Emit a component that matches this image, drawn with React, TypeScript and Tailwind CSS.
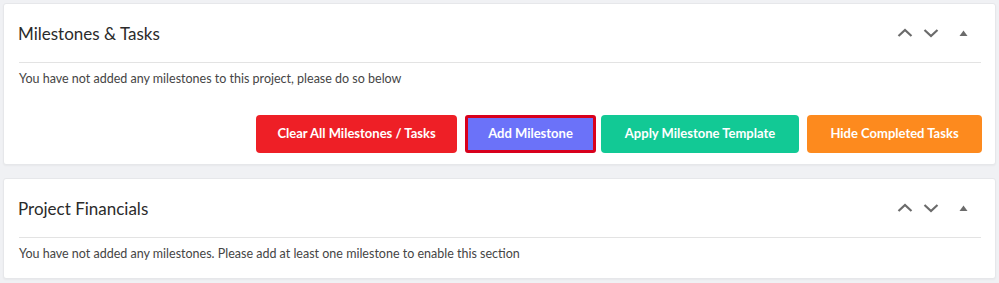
import React from "react";

const ChevUp = () => (
  <svg width="16" height="10" viewBox="0 0 16 10" className="block">
    <polyline points="1.5,8 8,2 14.5,8" fill="none" stroke="#6b6b6b" strokeWidth="2.2" />
  </svg>
);
const ChevDown = () => (
  <svg width="16" height="10" viewBox="0 0 16 10" className="block">
    <polyline points="1.5,2 8,8 14.5,2" fill="none" stroke="#6b6b6b" strokeWidth="2.2" />
  </svg>
);
const Tri = () => (
  <svg width="9" height="6" viewBox="0 0 9 6" className="block">
    <polygon points="0.5,6 4.5,0.5 8.5,6" fill="#6b6b6b" />
  </svg>
);

function Header({ title }: { title: string }) {
  return (
    <>
      <div className="h-[58px] flex items-center justify-between pl-[14px] pr-[27px]">
        <h2 className="text-[17px] text-[#2b2b2b] font-normal leading-none">{title}</h2>
        <div className="flex items-center">
          <ChevUp />
          <div className="w-[10px]" />
          <ChevDown />
          <div className="w-[20px]" />
          <Tri />
        </div>
      </div>
      <div className="ml-[15px] mr-[14px] h-px bg-[#e3e3e3]" />
    </>
  );
}

export default function App() {
  return (
    <div
      className="bg-[#f0f1f4] w-[999px] h-[283px] pt-[4px] pl-[3px] pr-[3px] overflow-hidden"
      style={{ fontFamily: "Lato, 'Open Sans', sans-serif" }}
    >
      <div className="bg-white rounded-[3px] border border-[#e6e7ea] shadow-[0_1px_2px_rgba(0,0,0,0.04)] h-[162px] -mt-px">
        <Header title="Milestones & Tasks" />
        <p className="pl-[15px] pt-[8px] text-[12.5px] leading-[16px] text-[#454545]">
          You have not added any milestones to this project, please do so below
        </p>
        <div className="flex justify-end pr-[13px] mt-[28px]">
          <button className="w-[201px] h-[38px] rounded-[4px] bg-[#ee1f26] text-white text-[13px] font-bold">
            Clear All Milestones / Tasks
          </button>
          <button className="ml-[8px] w-[131px] h-[38px] rounded-[3px] bg-[#6b72f9] border-[3px] border-[#d8001c] text-white text-[13px] font-bold">
            Add Milestone
          </button>
          <button className="ml-[5px] w-[198px] h-[38px] rounded-[4px] bg-[#12c995] text-white text-[13px] font-bold">
            Apply Milestone Template
          </button>
          <button className="ml-[8px] w-[175px] h-[38px] rounded-[4px] bg-[#fd8a1e] text-white text-[13px] font-bold">
            Hide Completed Tasks
          </button>
        </div>
      </div>
      <div className="mt-[13px] bg-white rounded-[3px] border border-[#e6e7ea] shadow-[0_1px_2px_rgba(0,0,0,0.04)] h-[101px]">
        <Header title="Project Financials" />
        <p className="pl-[15px] pt-[8px] text-[12.5px] leading-[16px] text-[#454545]">
          You have not added any milestones. Please add at least one milestone to enable this section
        </p>
      </div>
    </div>
  );
}
